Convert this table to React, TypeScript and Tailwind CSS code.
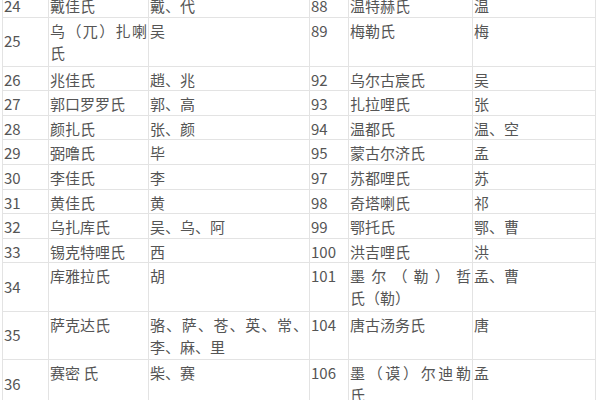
type Row = {
  h: string;
  cells: string[][];
};

const rows: Row[] = [
  { h: "h-[24.6px]", cells: [["24"], ["戴佳氏"], ["戴、代"], ["88"], ["温特赫氏"], ["温"]] },
  { h: "h-[49px]", cells: [["25"], ["乌（兀）扎喇", "氏"], ["吴"], ["89"], ["梅勒氏"], ["梅"]] },
  { h: "h-[24.6px]", cells: [["26"], ["兆佳氏"], ["趙、兆"], ["92"], ["乌尔古宸氏"], ["吴"]] },
  { h: "h-[24.6px]", cells: [["27"], ["郭口罗罗氏"], ["郭、高"], ["93"], ["扎拉哩氏"], ["张"]] },
  { h: "h-[24.6px]", cells: [["28"], ["颜扎氏"], ["张、颜"], ["94"], ["温都氏"], ["温、空"]] },
  { h: "h-[24.6px]", cells: [["29"], ["弼噜氏"], ["毕"], ["95"], ["蒙古尔济氏"], ["孟"]] },
  { h: "h-[24.6px]", cells: [["30"], ["李佳氏"], ["李"], ["97"], ["苏都哩氏"], ["苏"]] },
  { h: "h-[24.6px]", cells: [["31"], ["黄佳氏"], ["黄"], ["98"], ["奇塔喇氏"], ["祁"]] },
  { h: "h-[24.6px]", cells: [["32"], ["乌扎库氏"], ["吴、乌、阿"], ["99"], ["鄂托氏"], ["鄂、曹"]] },
  { h: "h-[24.6px]", cells: [["33"], ["锡克特哩氏"], ["西"], ["100"], ["洪吉哩氏"], ["洪"]] },
  { h: "h-[49px]", cells: [["34"], ["库雅拉氏"], ["胡"], ["101"], ["墨尔（勒）哲", "氏（勒）"], ["孟、曹"]] },
  { h: "h-[48px]", cells: [["35"], ["萨克达氏"], ["骆、萨、苍、英、常、", "李、麻、里"], ["104"], ["唐古汤务氏"], ["唐"]] },
  { h: "h-[49px]", cells: [["36"], ["赛密 氏"], ["柴、赛"], ["106"], ["墨（谟）尔迪勒", "氏"], ["孟"]] },
];

function Cell({ lines, first, middle }: { lines: string[]; first: boolean; middle: boolean }) {
  return (
    <div
      className={
        "border-r border-[#e3e3e3] pl-[1px] pr-[1px] overflow-hidden " +
        (first ? "border-l " : "") +
        (middle ? "flex items-center pb-[1px]" : "pt-[2px]")
      }
    >
      <div className="w-full">
        {lines.map((t, i) => (
          <div
            key={i}
            className={
              "leading-[22px] whitespace-nowrap " +
              (lines.length > 1 && i === 0 ? "text-justify [text-align-last:justify]" : "")
            }
          >
            {t}
          </div>
        ))}
      </div>
    </div>
  );
}

export default function App() {
  return (
    <div
      className="w-[600px] h-[400px] overflow-hidden bg-white text-[#555] text-[15px]"
      style={{ fontFamily: '"Noto Sans CJK SC", "Noto Sans", sans-serif' }}
    >
      <div className="ml-[2px] -mt-[7px] w-[594px]">
        {rows.map((r, ri) => (
          <div
            key={ri}
            className={"grid grid-cols-[47px_100px_161px_39px_124px_123px] border-b border-[#e3e3e3] " + r.h}
          >
            {r.cells.map((c, ci) => (
              <Cell key={ci} lines={c} first={ci === 0} middle={ci === 0 && r.h !== "h-[24.6px]"} />
            ))}
          </div>
        ))}
      </div>
    </div>
  );
}
